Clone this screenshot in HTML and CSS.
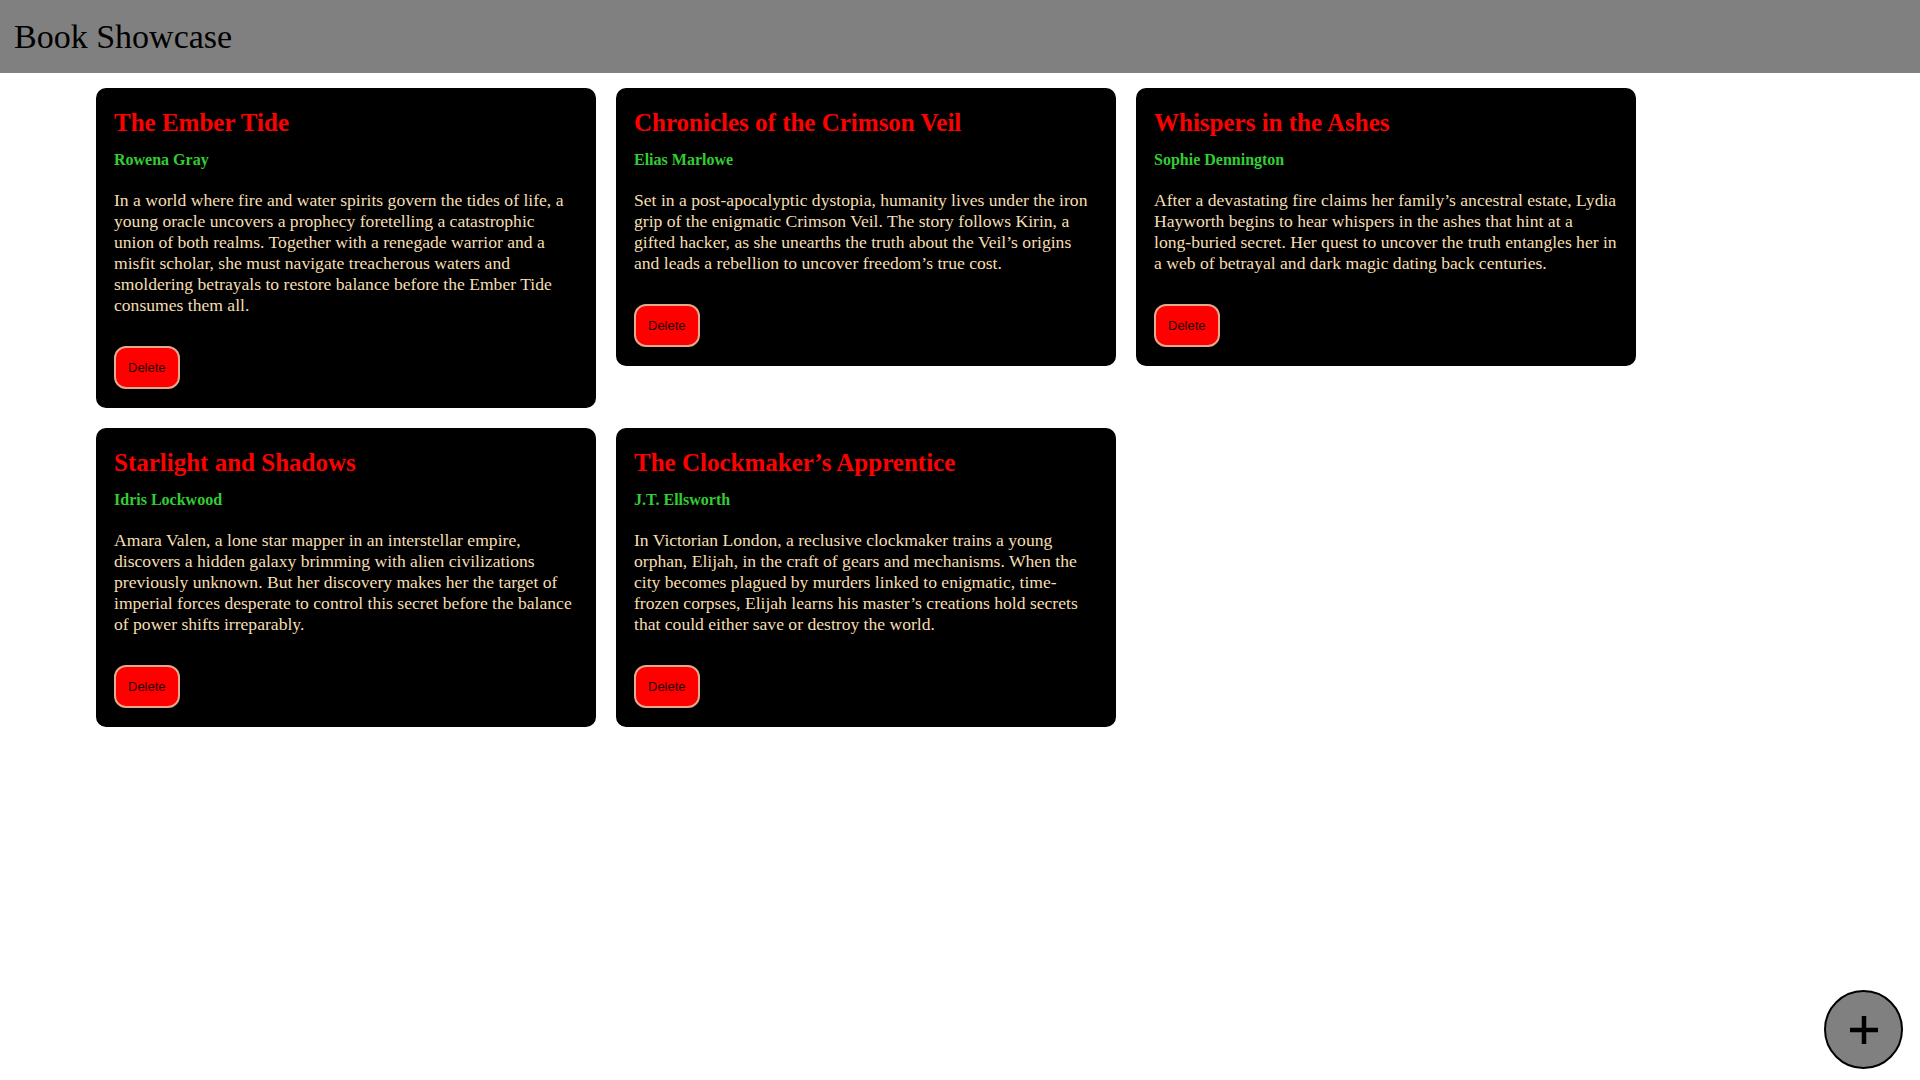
FILE: index.html
```html
<!DOCTYPE html>
<html lang="en">
<head>
<meta charset="utf-8">
<title>Book Showcase</title>
<link rel="stylesheet" href="styles.css">
</head>
<body>
<header class="topbar">
  <h1 class="brand">Book Showcase</h1>
</header>
<main class="grid">
  <article class="card">
    <h2 class="card-title">The Ember Tide</h2>
    <p class="card-author">Rowena Gray</p>
    <p class="card-desc">In a world where fire and water spirits govern the tides of life, a young oracle uncovers a prophecy foretelling a catastrophic union of both realms. Together with a renegade warrior and a misfit scholar, she must navigate treacherous waters and smoldering betrayals to restore balance before the Ember Tide consumes them all.</p>
    <button class="btn-delete">Delete</button>
  </article>
  <article class="card">
    <h2 class="card-title">Chronicles of the Crimson Veil</h2>
    <p class="card-author">Elias Marlowe</p>
    <p class="card-desc">Set in a post-apocalyptic dystopia, humanity lives under the iron grip of the enigmatic Crimson Veil. The story follows Kirin, a gifted hacker, as she unearths the truth about the Veil’s origins and leads a rebellion to uncover freedom’s true cost.</p>
    <button class="btn-delete">Delete</button>
  </article>
  <article class="card">
    <h2 class="card-title">Whispers in the Ashes</h2>
    <p class="card-author">Sophie Dennington</p>
    <p class="card-desc">After a devastating fire claims her family’s ancestral estate, Lydia Hayworth begins to hear whispers in the ashes that hint at a <span class="nowrap">long-buried</span> secret. Her quest to uncover the truth entangles her in a web of betrayal and dark magic dating back centuries.</p>
    <button class="btn-delete">Delete</button>
  </article>
  <article class="card">
    <h2 class="card-title">Starlight and Shadows</h2>
    <p class="card-author">Idris Lockwood</p>
    <p class="card-desc">Amara Valen, a lone star mapper in an interstellar empire, discovers a hidden galaxy brimming with alien civilizations previously unknown. But her discovery makes her the target of imperial forces desperate to control this secret before the balance of power shifts irreparably.</p>
    <button class="btn-delete">Delete</button>
  </article>
  <article class="card">
    <h2 class="card-title">The Clockmaker’s Apprentice</h2>
    <p class="card-author">J.T. Ellsworth</p>
    <p class="card-desc">In Victorian London, a reclusive clockmaker trains a young orphan, Elijah, in the craft of gears and mechanisms. When the city becomes plagued by murders linked to enigmatic, time-frozen corpses, Elijah learns his master’s creations hold secrets that could either save or destroy the world.</p>
    <button class="btn-delete">Delete</button>
  </article>
</main>
<button class="fab" aria-label="Add book">
  <svg viewBox="0 0 40 40" width="40" height="40"><path d="M20 6v28M6 20h28" stroke="#000" stroke-width="4.5" fill="none"/></svg>
</button>
</body>
</html>
```
FILE: styles.css
```css
html, body {
  margin: 0;
  padding: 0;
  background: #fff;
  font-family: "Liberation Serif", "Times New Roman", serif;
}

.topbar {
  height: 73px;
  background: #808080;
  display: flex;
  align-items: center;
  padding: 0 14px;
}

.brand {
  margin: 0;
  font-size: 34px;
  font-weight: 400;
  line-height: 1;
  color: #000;
}

.grid {
  display: grid;
  grid-template-columns: repeat(3, 500px);
  gap: 20px;
  align-items: start;
  padding: 15px 0 0 96px;
}

.card {
  background: #000;
  border-radius: 10px;
  padding: 20px 18px 19px;
  display: flex;
  flex-direction: column;
  align-items: flex-start;
}

.card-title {
  margin: 0;
  font-size: 25px;
  line-height: 30px;
  font-weight: 700;
  color: #f00;
}

.card-author {
  margin: 12px 0 0;
  font-size: 16px;
  line-height: 20px;
  font-weight: 700;
  color: #32cd32;
}

.card-desc {
  margin: 20px 0 0;
  font-size: 17.6px;
  line-height: 21px;
  color: #f5deb3;
}

.nowrap {
  white-space: nowrap;
}

.btn-delete {
  margin-top: 30px;
  height: 43px;
  padding: 0 12px;
  background: #f00;
  border: 2px solid #e3a98a;
  border-radius: 12px;
  font-family: "Liberation Sans", Arial, sans-serif;
  font-size: 13px;
  color: #200;
  cursor: pointer;
}

.fab {
  position: fixed;
  right: 17px;
  bottom: 11px;
  width: 79px;
  height: 79px;
  border-radius: 50%;
  background: #808080;
  border: 2px solid #000;
  display: flex;
  align-items: center;
  justify-content: center;
  padding: 0;
  cursor: pointer;
}
```
